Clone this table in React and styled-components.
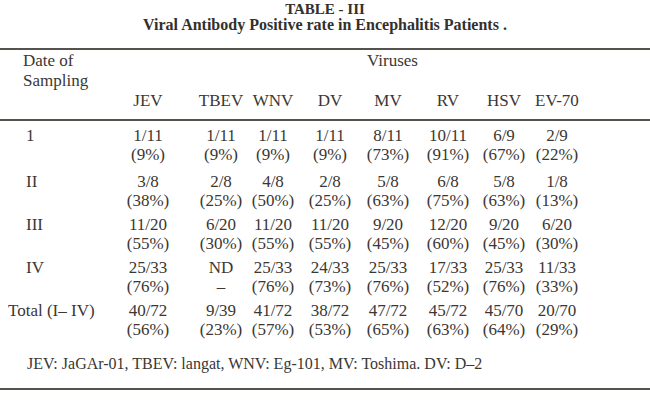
import styled, { createGlobalStyle } from "styled-components";

const GlobalStyle = createGlobalStyle`
  html, body {
    margin: 0;
    padding: 0;
    background: #ffffff;
  }
`;

// label column, then one column per virus (centred under its name)
const COLUMNS = "100px 96px 50px 54px 60px 56px 64px 48px 58px";

const VIRUSES = ["JEV", "TBEV", "WNV", "DV", "MV", "RV", "HSV", "EV-70"];

const ROWS = [
  {
    label: "1",
    indent: 26,
    cells: [
      ["1/11", "(9%)"],
      ["1/11", "(9%)"],
      ["1/11", "(9%)"],
      ["1/11", "(9%)"],
      ["8/11", "(73%)"],
      ["10/11", "(91%)"],
      ["6/9", "(67%)"],
      ["2/9", "(22%)"],
    ],
  },
  {
    label: "II",
    indent: 26,
    cells: [
      ["3/8", "(38%)"],
      ["2/8", "(25%)"],
      ["4/8", "(50%)"],
      ["2/8", "(25%)"],
      ["5/8", "(63%)"],
      ["6/8", "(75%)"],
      ["5/8", "(63%)"],
      ["1/8", "(13%)"],
    ],
  },
  {
    label: "III",
    indent: 26,
    cells: [
      ["11/20", "(55%)"],
      ["6/20", "(30%)"],
      ["11/20", "(55%)"],
      ["11/20", "(55%)"],
      ["9/20", "(45%)"],
      ["12/20", "(60%)"],
      ["9/20", "(45%)"],
      ["6/20", "(30%)"],
    ],
  },
  {
    label: "IV",
    indent: 26,
    cells: [
      ["25/33", "(76%)"],
      ["ND", "–"],
      ["25/33", "(76%)"],
      ["24/33", "(73%)"],
      ["25/33", "(76%)"],
      ["17/33", "(52%)"],
      ["25/33", "(76%)"],
      ["11/33", "(33%)"],
    ],
  },
  {
    label: "Total (I– IV)",
    indent: 8,
    cells: [
      ["40/72", "(56%)"],
      ["9/39", "(23%)"],
      ["41/72", "(57%)"],
      ["38/72", "(53%)"],
      ["47/72", "(65%)"],
      ["45/72", "(63%)"],
      ["45/70", "(64%)"],
      ["20/70", "(29%)"],
    ],
  },
];

const Page = styled.div`
  width: 650px;
  height: 409px;
  overflow: hidden;
  padding-top: 2px;
  box-sizing: border-box;
  font-family: "Liberation Serif", "Times New Roman", serif;
  color: #3b3733;
`;

const Caption = styled.header`
  text-align: center;
  font-weight: bold;
  color: #33302c;
`;

const Title = styled.div`
  font-size: 15px;
  line-height: 15px;
`;

const Subtitle = styled.div`
  font-size: 16px;
  line-height: 15px;
`;

const Rule = styled.hr`
  margin: ${(props) => props.$margin || "0"};
  border: none;
  height: 2px;
  background: #55514c;
`;

const HeaderGrid = styled.div`
  display: grid;
  grid-template-columns: ${COLUMNS};
  grid-template-rows: 20px 20px 20px;
  font-size: 17px;
  line-height: 20px;
  margin: 1px 0 8px;
`;

const DateLabel = styled.div`
  grid-column: 1;
  grid-row: 1 / 3;
  padding-left: 23px;
`;

const VirusesLabel = styled.div`
  grid-column: 2 / -1;
  grid-row: 1;
  padding-left: 267px;
`;

const VirusName = styled.div`
  grid-row: 3;
  text-align: center;
`;

const Body = styled.div`
  display: flex;
  flex-direction: column;
  gap: 5px;
  margin-top: 5px;
`;

const Row = styled.div`
  display: grid;
  grid-template-columns: ${COLUMNS};
  font-size: 17px;
  line-height: 19px;
  margin-bottom: ${(props) => (props.$spaced ? "3px" : "0")};
`;

const RowLabel = styled.div`
  padding-left: ${(props) => props.$indent}px;
  white-space: nowrap;
`;

const Cell = styled.div`
  display: flex;
  flex-direction: column;
  align-items: center;
  white-space: nowrap;
`;

const Footnote = styled.p`
  margin: 15px 0 14px;
  padding-left: 27px;
  font-size: 16px;
  line-height: 20px;
`;

function App() {
  return (
    <>
      <GlobalStyle />
      <Page>
        <Caption>
          <Title>TABLE - III</Title>
          <Subtitle>Viral Antibody Positive rate in Encephalitis Patients .</Subtitle>
        </Caption>
        <Rule $margin="16px 0 0" />

        <HeaderGrid>
          <DateLabel>
            Date of
            <br />
            Sampling
          </DateLabel>
          <VirusesLabel>Viruses</VirusesLabel>
          {VIRUSES.map((name, i) => (
            <VirusName key={name} style={{ gridColumn: i + 2 }}>
              {name}
            </VirusName>
          ))}
        </HeaderGrid>
        <Rule />

        <Body>
          {ROWS.map((row, r) => (
            <Row key={row.label} $spaced={r === 0}>
              <RowLabel $indent={row.indent}>{row.label}</RowLabel>
              {row.cells.map(([count, rate], i) => (
                <Cell key={i}>
                  <span>{count}</span>
                  <span>{rate}</span>
                </Cell>
              ))}
            </Row>
          ))}
        </Body>

        <Footnote>
          JEV: JaGAr-01, TBEV: langat, WNV: Eg-101, MV: Toshima. DV: D–2
        </Footnote>
        <Rule />
      </Page>
    </>
  );
}

export default App;
